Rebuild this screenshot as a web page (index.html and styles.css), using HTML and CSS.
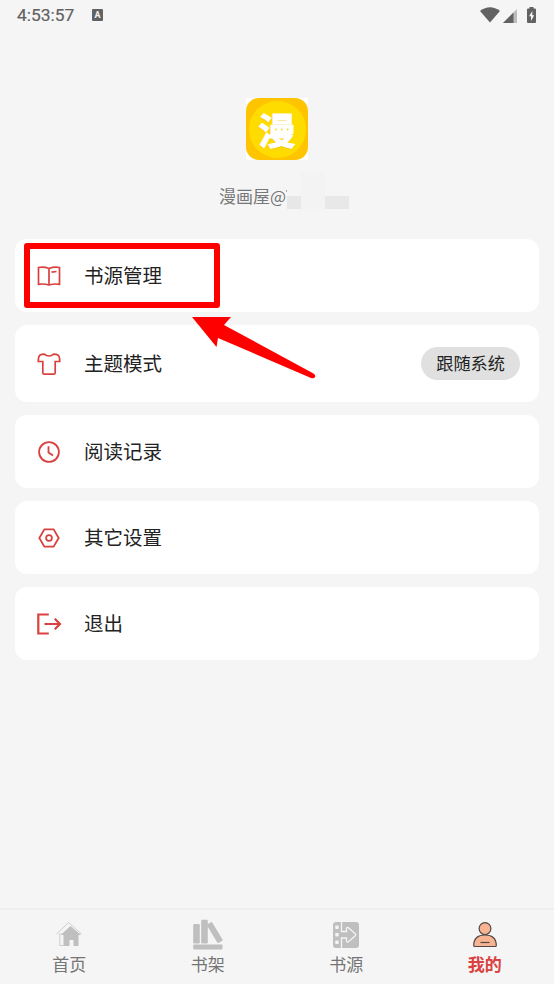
FILE: index.html
```html
<!DOCTYPE html>
<html lang="zh-CN">
<head>
<meta charset="utf-8">
<title>我的</title>
<link rel="stylesheet" href="styles.css">
</head>
<body>
<div class="app">
  <header class="status">
    <span class="time">4:53:57</span>
    <span class="badge">A</span>
    <svg class="wifi" width="20" height="16" viewBox="0 0 20 16"><path d="M0 4Q10-3.500 20 4L10 15.500Z"/></svg>
    <svg class="signal" width="14" height="14" viewBox="0 0 14 14"><path d="M0 14L14 0V14Z" fill="#bdbdbd"/><path d="M0 14L10.500 3.500V14Z"/></svg>
    <svg class="battery" width="9" height="16" viewBox="0 0 9 16"><path d="M2.500 0h4v1.500H8q1 0 1 1V15q0 1-1 1H1q-1 0-1-1V2.500q0-1 1-1h1.500z"/><path d="M5.300 4L2 9.300h2V14l3.200-5.700H5.300z" fill="#f5f5f5"/></svg>
  </header>

  <section class="profile">
    <div class="logo"><div class="logo-tile"><div class="logo-disc"><span>漫</span></div></div></div>
    <div class="account"><span>漫画屋@</span><i class="tick"></i><i class="mask mask-a"></i><i class="mask mask-b"></i><i class="mask mask-c"></i></div>
  </section>

  <main class="list">
    <div class="card">
      <svg class="icon" viewBox="0 0 26 26"><path d="M2.500 4.500Q8 3.500 13 5.500Q18 3.500 23.500 4.500V21.300Q18 20.500 13 22Q8 20.500 2.500 21.300ZM13 5.500V22M15.500 9.200L20.500 8.500" stroke-width="1.700"/></svg>
      <span class="label">书源管理</span>
      <div class="highlight"></div>
      <svg class="arrow" width="124" height="64" viewBox="0 0 124 64"><path d="M0 1L39 1L32 9L121.500 57.500Q124 59 123 61Q122 63 119 62L26 22L24.500 31Z"/></svg>
    </div>
    <div class="card tall">
      <svg class="icon" viewBox="0 0 26 26"><path d="M8.300 3.200Q10.300 5 13 5T17.700 3.200Q20.500 3.200 22.300 4.300Q23.800 6 23.700 10.500H19.200V21.700Q19.200 23.200 17.700 23.200H8.300Q6.800 23.200 6.800 21.700V10.500H2.300Q2.200 6 3.700 4.300Q5.500 3.200 8.300 3.200Z" stroke-width="1.700"/></svg>
      <span class="label">主题模式</span>
      <span class="pill">跟随系统</span>
    </div>
    <div class="card">
      <svg class="icon" viewBox="0 0 26 26"><circle cx="13" cy="13" r="9.900" stroke-width="1.800"/><path d="M12.500 7.300V13.400L17 16.400" stroke-width="1.800"/></svg>
      <span class="label">阅读记录</span>
    </div>
    <div class="card">
      <svg class="icon" viewBox="0 0 26 26"><path d="M8.400 4.300H17.600L22.700 13L17.600 21.700H8.400L3.300 13Z" stroke-width="1.800"/><circle cx="13" cy="13" r="2.900" stroke-width="1.700"/></svg>
      <span class="label">其它设置</span>
    </div>
    <div class="card">
      <svg class="icon" viewBox="0 0 26 26"><path d="M12.800 3.500H2.300V22.500H12.800M8.500 13H23.800M18.800 7.800L24 13L18.800 18.200" stroke-width="2.200"/></svg>
      <span class="label">退出</span>
    </div>
  </main>

  <nav class="tabs">
    <div class="tab">
      <svg width="32" height="32" viewBox="0 0 32 32"><path d="M6.800 15V27.500H11M3.500 16L15.500 4.500L28.500 16" fill="none" stroke="#c9c9c9" stroke-width=".9"/><path d="M7.500 17L17.500 8L28 17H25.500V28H20.500V22H16.500V28H10.500V17Z"/></svg>
      <span>首页</span>
    </div>
    <div class="tab">
      <svg width="32" height="32" viewBox="0 0 32 32"><rect x="1.200" y="6" width="6.600" height="19.500" rx="1.200"/><rect x="9.200" y="1.800" width="6.600" height="23.700" rx="1.200"/><rect x="19.800" y="3.700" width="6" height="21.800" rx="1.200" transform="rotate(-31 22.800 14.600)"/><rect x="1.200" y="26.600" width="29.300" height="5" rx="1"/></svg>
      <span>书架</span>
    </div>
    <div class="tab">
      <svg width="32" height="32" viewBox="0 0 32 32"><rect x="3" y="4" width="26" height="26" rx="3"/><g fill="#f5f5f5"><rect x="5.200" y="7.600" width="3.500" height="3.500" rx="1"/><rect x="5.200" y="15" width="3.500" height="3.500" rx="1"/><rect x="5.200" y="22.500" width="3.500" height="3.500" rx="1"/></g><path d="M11.500 4V13.500H16.500V11Q16.500 8.500 18.500 9.800L25.200 15.800Q26.200 16.800 25.200 17.800L18.500 23.700Q16.500 25 16.500 22.500V20H11.500V30" fill="none" stroke="#f5f5f5" stroke-width="1.300"/></svg>
      <span>书源</span>
    </div>
    <div class="tab active">
      <svg width="32" height="32" viewBox="0 0 32 32"><g fill="#f8b492" stroke="#514643" stroke-width="1.200"><path d="M4.700 27.500C4.700 20.500 9 17 16 17S27.300 20.500 27.300 27.500Q27.300 28.500 26 28.500H6Q4.700 28.500 4.700 27.500Z"/><circle cx="16" cy="10.600" r="5.900"/><path d="M11.500 24.500H20.500"/></g></svg>
      <span>我的</span>
    </div>
  </nav>
</div>
</body>
</html>
```
FILE: styles.css
```css
* { box-sizing: border-box; }
body {
  margin: 0;
  background: #f5f5f5;
  color: #222;
  font-family: "Noto Sans CJK SC", sans-serif;
}
.app {
  display: flex;
  flex-direction: column;
  height: 984px;
  overflow: hidden;
}
.status {
  display: flex;
  align-items: center;
  height: 30px;
  padding: 0 18px 0 17px;
  color: #626262;
  font: 400 17.400px Roboto, sans-serif;
}
.status svg { fill: #626262; }
.time { width: 75px; -webkit-text-stroke: .2px #626262; }
.badge {
  width: 11px;
  height: 12px;
  border-radius: 1px;
  background: #626262;
  color: #f5f5f5;
  font-size: 9px;
  font-weight: 700;
  line-height: 12px;
  text-align: center;
}
.wifi { margin-left: auto; }
.signal { margin: 1px 10px 0 3px; }
.battery { margin-top: -1px; }
.profile {
  display: flex;
  flex-direction: column;
  align-items: center;
  height: 209px;
  padding-top: 68px;
}
.logo { width: 62px; height: 62px; background: #fff; }
.logo-tile {
  display: grid;
  place-items: center;
  width: 62px;
  height: 62px;
  border-radius: 13px;
  background: #ffc400;
}
.logo-disc {
  display: grid;
  place-items: center;
  width: 57px;
  height: 57px;
  border-radius: 50%;
  background: #ffdc00;
  color: #fff;
  font-size: 37px;
  font-weight: 700;
  line-height: 57px;
  -webkit-text-stroke: 1px #fff;
  stroke-linejoin: round;
  text-shadow: 0 1px 2px #f2b900;
}
.logo-disc span { height: 57px; }
.account {
  display: flex;
  align-items: flex-end;
  width: 130px;
  height: 37px;
  margin: 12px 0 0 14px;
  color: #777;
  font-size: 17px;
  line-height: 27px;
}
.account span { width: 67px; white-space: nowrap; }
.tick { width: 1px; height: 2px; margin-bottom: 17px; background: #aaa; }
.mask { height: 13px; }
.mask-a { width: 14px; background: #e7e7e7; }
.mask-b { width: 24px; height: 36px; background: #f3f3f3; }
.mask-c { width: 24px; background: #e8e8e8; }
.list {
  display: flex;
  flex-direction: column;
  gap: 13px;
  padding: 0 15px;
}
.card {
  position: relative;
  display: flex;
  align-items: center;
  height: 73px;
  padding: 0 20px 0 21px;
  border-radius: 12px;
  background: #fff;
}
.card.tall { height: 77px; }
.icon {
  width: 26px;
  height: 26px;
  margin-right: 22px;
  fill: none;
  stroke: #d9413e;
}
.label { padding-bottom: 2px; font-size: 19.500px; line-height: 28px; font-weight: 400; }
.pill {
  height: 33px;
  margin: 0 -1px 0 auto;
  padding: 0 15px;
  border-radius: 17px;
  background: #e0e0e0;
  font-size: 17.200px;
  line-height: 32px;
}
.highlight {
  position: absolute;
  top: 4px;
  left: 9px;
  width: 196px;
  height: 65px;
  border: 6px solid #f00;
  border-radius: 3px;
}
.arrow {
  position: absolute;
  z-index: 2;
  top: 77px;
  left: 177px;
  fill: #f00;
}
.tabs {
  display: grid;
  grid-template-columns: repeat(4, 1fr);
  height: 76px;
  margin-top: auto;
  border-top: 2px solid #eee;
}
.tab {
  display: flex;
  flex-direction: column;
  align-items: center;
  padding-top: 8px;
  color: #757575;
  fill: #bfbfbf;
  font-size: 17px;
  line-height: 27px;
}
.tab.active { color: #da403d; font-weight: 700; }
```
